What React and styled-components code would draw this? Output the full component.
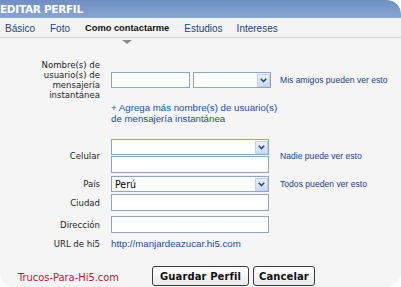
import React from 'react';
import styled, { createGlobalStyle } from 'styled-components';

const GlobalStyle = createGlobalStyle`
  html, body {
    margin: 0;
    padding: 0;
    background: #ffffff;
  }
  body {
    font-family: "Liberation Sans", Arial, sans-serif;
  }
`;

const Panel = styled.div`
  width: 401px;
  height: 287px;
  background: #f5f5f5;
  border-radius: 0 14px 16px 14px;
  overflow: hidden;
  display: flex;
  flex-direction: column;
`;

const Header = styled.div`
  height: 18px;
  background: linear-gradient(#6f8fc2, #8aa6d2);
  border-top-right-radius: 14px;
  color: #ffffff;
  font-family: "DejaVu Sans", Verdana, sans-serif;
  font-weight: bold;
  font-size: 10.5px;
  line-height: 19px;
  letter-spacing: -0.3px;
`;

const Tabs = styled.div`
  height: 18px;
  margin-top: 1px;
  background: #f3f3f3;
  border-bottom: 1px solid #d9d9d9;
  display: flex;
  align-items: center;
`;

const Tab = styled.div`
  font-size: ${(p) => (p.$active ? 9.3 : 10)}px;
  margin-left: ${(p) => p.$ml}px;
  color: ${(p) => (p.$active ? '#111111' : '#1d4379')};
  font-weight: ${(p) => (p.$active ? 'bold' : 'normal')};
  position: relative;
`;

const Pointer = styled.div`
  position: absolute;
  left: 50%;
  top: 17px;
  margin-left: -5px;
  width: 0;
  height: 0;
  border-left: 5px solid transparent;
  border-right: 5px solid transparent;
  border-top: 4px solid #8a8a8a;
`;

const Form = styled.div`
  display: flex;
  flex-direction: column;
`;

const Row = styled.div`
  display: grid;
  grid-template-columns: 100px 158px 1fr;
  column-gap: 11px;
  align-items: center;
  margin-top: ${(p) => p.$mt || 0}px;
`;

const Label = styled.div`
  text-align: right;
  font-family: "DejaVu Sans Condensed", "DejaVu Sans", sans-serif;
  font-size: 9.5px;
  line-height: 10px;
  color: #1e1e1e;
`;

const Controls = styled.div`
  display: flex;
  flex-direction: ${(p) => (p.$col ? 'column' : 'row')};
  gap: ${(p) => (p.$col ? 1 : 3)}px;
  align-items: flex-start;
`;

const Input = styled.div`
  box-sizing: border-box;
  width: ${(p) => p.$w || 158}px;
  height: ${(p) => p.$h || 17}px;
  background: #ffffff;
  border: 1px solid #8ea4bf;
  flex-shrink: 0;
`;

const SelectBox = styled.div`
  box-sizing: border-box;
  width: ${(p) => p.$w || 158}px;
  height: 16px;
  background: #ffffff;
  border: 1px solid #8ea4bf;
  display: flex;
  align-items: center;
  flex-shrink: 0;
`;

const SelectText = styled.div`
  flex: 1;
  font-family: "DejaVu Sans Condensed", "DejaVu Sans", sans-serif;
  font-size: 10.5px;
  padding-left: 3px;
  color: #000000;
`;

const SelectButton = styled.div`
  width: 13px;
  height: 13px;
  background: linear-gradient(#e8effb, #cbd9f3);
  border: 1px solid #c3d1ea;
  box-sizing: border-box;
  display: flex;
  align-items: center;
  justify-content: center;
`;

const Hint = styled.div`
  font-size: 8.6px;
  color: #1d4379;
  white-space: nowrap;
`;

const LinkText = styled.div`
  grid-column: 2 / 4;
  font-size: 9.7px;
  line-height: 11px;
  color: #1d4f8f;
`;

const Footer = styled.div`
  display: flex;
  align-items: center;
  margin-top: 17px;
`;

const Brand = styled.div`
  width: 134px;
  padding-left: 18px;
  box-sizing: border-box;
  font-family: "DejaVu Sans Condensed", "DejaVu Sans", sans-serif;
  font-size: 11px;
  color: #c4142d;
  margin-top: 2px;
`;

const Button = styled.button`
  height: 20px;
  margin-left: ${(p) => p.$ml}px;
  padding: 0 ${(p) => p.$pad}px;
  background: linear-gradient(#ffffff, #e9e9e9);
  border: 1px solid #3c3c3c;
  border-radius: 3px;
  font-family: "DejaVu Sans", Verdana, sans-serif;
  font-size: 10px;
  font-weight: bold;
  letter-spacing: 0.1px;
  color: #111111;
`;

const Chevron = () => (
  <svg width="7" height="5" viewBox="0 0 7 5">
    <path d="M0.8 0.8 L3.5 3.6 L6.2 0.8" fill="none" stroke="#2b4a86" strokeWidth="1.6" />
  </svg>
);

const Select = ({ w, value }) => (
  <SelectBox $w={w}>
    <SelectText>{value}</SelectText>
    <SelectButton>
      <Chevron />
    </SelectButton>
  </SelectBox>
);

const App = () => {
  return (
    <>
      <GlobalStyle />
      <Panel>
        <Header>EDITAR PERFIL</Header>
        <Tabs>
          <Tab $ml={5}>Básico</Tab>
          <Tab $ml={15}>Foto</Tab>
          <Tab $ml={15} $active>
            Como contactarme
            <Pointer />
          </Tab>
          <Tab $ml={15}>Estudios</Tab>
          <Tab $ml={14}>Intereses</Tab>
        </Tabs>
        <Form>
          <Row $mt={22}>
            <Label>
              Nombre(s) de<br />usuario(s) de<br />mensajería<br />instantánea
            </Label>
            <Controls>
              <Input $w={79} $h={16} />
              <Select w={78} />
            </Controls>
            <Hint>Mis amigos pueden ver esto</Hint>
          </Row>
          <Row $mt={2}>
            <div />
            <LinkText>
              + Agrega más nombre(s) de usuario(s)<br />de mensajería instantánea
            </LinkText>
          </Row>
          <Row $mt={15}>
            <Label>Celular</Label>
            <Controls $col>
              <Select />
              <Input />
            </Controls>
            <Hint>Nadie puede ver esto</Hint>
          </Row>
          <Row $mt={3}>
            <Label>País</Label>
            <Select value="Perú" />
            <Hint>Todos pueden ver esto</Hint>
          </Row>
          <Row $mt={2}>
            <Label>Ciudad</Label>
            <Input />
          </Row>
          <Row $mt={5}>
            <Label>Dirección</Label>
            <Input />
          </Row>
          <Row $mt={5}>
            <Label>URL de hi5</Label>
            <LinkText>http://manjardeazucar.hi5.com</LinkText>
          </Row>
        </Form>
        <Footer>
          <Brand>Trucos-Para-Hi5.com</Brand>
          <Button $ml={18} $pad={7}>Guardar Perfil</Button>
          <Button $ml={4} $pad={5}>Cancelar</Button>
        </Footer>
      </Panel>
    </>
  );
};

export default App;
